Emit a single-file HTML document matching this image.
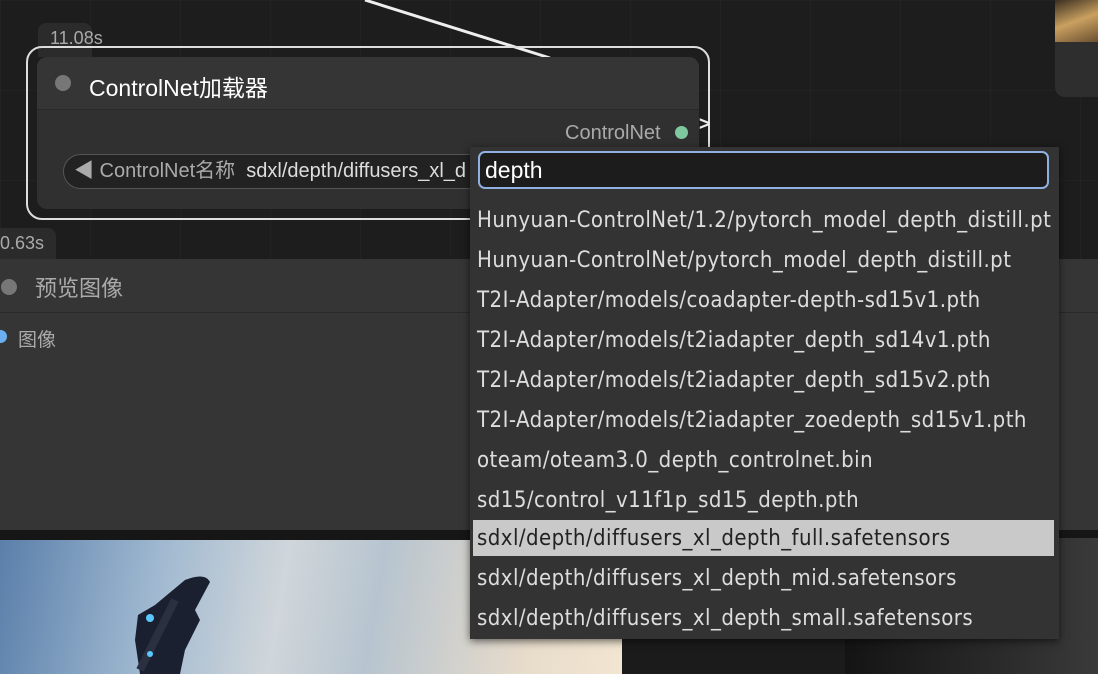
<!DOCTYPE html>
<html><head><meta charset="utf-8"><style>
*{margin:0;padding:0;box-sizing:border-box}
body{width:1098px;height:674px;overflow:hidden;background:#1d1d1d;font-family:"Liberation Sans","Noto Sans CJK SC",sans-serif;position:relative;
background-image:linear-gradient(90deg,rgba(255,255,255,0.025) 1px,transparent 1px),linear-gradient(rgba(255,255,255,0.025) 1px,transparent 1px);background-size:90px 90px}
.abs{position:absolute}
.item{position:absolute;left:3px;width:581px;height:36px;line-height:38px;padding-left:4px;color:#ddd;font-size:22px;font-family:"DejaVu Sans Condensed","Liberation Sans",sans-serif;letter-spacing:0.45px;white-space:nowrap}
</style></head><body>
<svg class="abs" style="left:0;top:0" width="1098" height="674"><line x1="365" y1="0" x2="550" y2="58" stroke="#eee" stroke-width="3"/></svg>
<div class="abs" style="left:1055px;top:0;width:43px;height:97px;background:#2e2e2e;border-radius:0 0 0 10px"></div>
<div class="abs" style="left:1055px;top:0;width:43px;height:42px;background:linear-gradient(160deg,#3a2e20,#c9a060 50%,#6b5030)"></div>
<!-- node 1 -->
<div class="abs" style="left:38px;top:23px;width:54px;height:34px;background:#2b2b2b;border-radius:8px 8px 0 0;color:#aaa;font-size:18px;padding:5px 0 0 12px;white-space:nowrap">11.08s</div>
<div class="abs" style="left:26px;top:46px;width:684px;height:174px;border:2px solid #ddd;border-radius:16px"></div>
<div class="abs" style="left:37px;top:57px;width:662px;height:152px;background:#303030;border-radius:10px;overflow:hidden">
 <div style="height:53px;background:#353535;border-bottom:1px solid #2a2a2a"></div>
</div>
<div class="abs" style="left:55px;top:75px;width:16px;height:16px;border-radius:50%;background:#777"></div>
<div class="abs" style="left:89px;top:69px;color:#fff;font-size:23px">ControlNet加载器</div>
<div class="abs" style="left:565px;top:122px;color:#aaa;font-size:20px">ControlNet</div>
<div class="abs" style="left:675px;top:126px;width:13px;height:13px;border-radius:50%;background:#7ec8a0"></div>
<div class="abs" style="left:699px;top:114px;color:#eee;font-size:19px;font-weight:bold">&gt;</div>
<div class="abs" style="left:63px;top:154px;width:430px;height:35px;background:#222;border:1px solid #555;border-radius:18px;color:#aaa;font-size:20px;line-height:33px;padding-left:10px;white-space:nowrap;overflow:hidden">◀ ControlNet名称 &nbsp;<span style="color:#ddd">sdxl/depth/diffusers_xl_d</span></div>
<!-- node 2 -->
<div class="abs" style="left:0;top:228px;width:56px;height:34px;background:#2b2b2b;border-radius:0 8px 0 0;color:#aaa;font-size:18px;padding:5px 0 0 0">0.63s</div>
<div class="abs" style="left:0;top:259px;width:1098px;height:271px;background:#353535">
 <div style="height:54px;border-bottom:1px solid #2a2a2a"></div>
</div>
<div class="abs" style="left:1px;top:279px;width:16px;height:16px;border-radius:50%;background:#777"></div>
<div class="abs" style="left:35px;top:271px;color:#aaa;font-size:22px">预览图像</div>
<div class="abs" style="left:-6px;top:330px;width:13px;height:13px;border-radius:50%;background:#6ab0f0"></div>
<div class="abs" style="left:18px;top:325px;color:#aaa;font-size:19px">图像</div>
<div class="abs" style="left:0;top:530px;width:1098px;height:144px;background:#161616"></div>
<div class="abs" style="left:0;top:540px;width:622px;height:134px;background:linear-gradient(100deg,#5a7faa 0%,#9fb8d0 25%,#d0d6da 45%,#b7c4cf 60%,#e8dccb 85%,#f2e6d2 100%)"></div>
<svg class="abs" style="left:80px;top:560px" width="180" height="114"><path d="M105 20 Q125 12 130 22 L115 50 L120 60 L105 90 L100 114 L60 114 L55 80 L58 55 L75 45 Z" fill="#1a2030"/><path d="M60 110 L95 40" stroke="#2a3040" stroke-width="8"/><circle cx="70" cy="58" r="4" fill="#5ac8ff"/><circle cx="70" cy="94" r="3" fill="#5ac8ff"/></svg>
<div class="abs" style="left:622px;top:540px;width:476px;height:134px;background:#1b1b1b"></div>
<div class="abs" style="left:845px;top:538px;width:253px;height:136px;background:linear-gradient(90deg,#141414,#2a2a2a 60%,#3a3a3a)"></div>
<!-- dropdown -->
<div class="abs" style="left:470px;top:147px;width:589px;height:492px;background:#333;box-shadow:0 2px 8px rgba(0,0,0,.6)">
 <div class="abs" style="left:8px;top:4px;width:571px;height:38px;background:#1c1c1c;border:2px solid #8fb0e0;border-radius:7px;color:#fff;font-size:23px;line-height:34px;padding-left:5px">depth</div>
 <div class="item" style="top:55px">Hunyuan-ControlNet/1.2/pytorch_model_depth_distill.pt</div>
 <div class="item" style="top:95px">Hunyuan-ControlNet/pytorch_model_depth_distill.pt</div>
 <div class="item" style="top:135px">T2I-Adapter/models/coadapter-depth-sd15v1.pth</div>
 <div class="item" style="top:175px">T2I-Adapter/models/t2iadapter_depth_sd14v1.pth</div>
 <div class="item" style="top:215px">T2I-Adapter/models/t2iadapter_depth_sd15v2.pth</div>
 <div class="item" style="top:255px">T2I-Adapter/models/t2iadapter_zoedepth_sd15v1.pth</div>
 <div class="item" style="top:295px">oteam/oteam3.0_depth_controlnet.bin</div>
 <div class="item" style="top:335px">sd15/control_v11f1p_sd15_depth.pth</div>
 <div class="item" style="top:373px;background:#c9c9c9;color:#222">sdxl/depth/diffusers_xl_depth_full.safetensors</div>
 <div class="item" style="top:413px">sdxl/depth/diffusers_xl_depth_mid.safetensors</div>
 <div class="item" style="top:453px">sdxl/depth/diffusers_xl_depth_small.safetensors</div>
</div>
</body></html>
